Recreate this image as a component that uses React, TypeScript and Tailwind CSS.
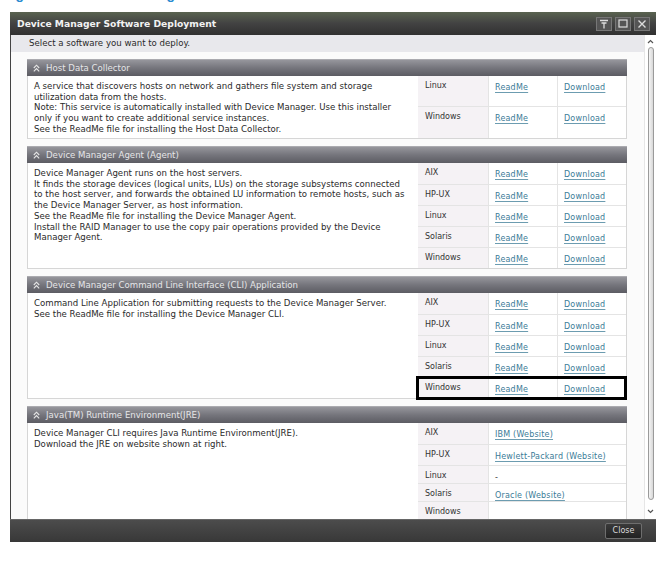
import type { ReactNode } from 'react';

type Row = { os: string; h: string; readme?: boolean; site?: string };

const osRows = (heights: string[]): Row[] =>
  ['AIX', 'HP-UX', 'Linux', 'Solaris', 'Windows'].map((os, i) => ({ os, h: heights[i], readme: true }));

const Chevrons = () => (
  <svg width="7" height="8" viewBox="0 0 7 8" className="shrink-0">
    <path d="M0.8 4 L3.5 1.2 L6.2 4 M0.8 7.3 L3.5 4.5 L6.2 7.3" fill="none" stroke="#e6e6e6" strokeWidth="1.1" />
  </svg>
);

const Link = ({ children }: { children: ReactNode }) => (
  <span className="text-[#3b7b97] underline underline-offset-[1.5px] decoration-[#6c9cb0] tracking-[0.2px]">
    {children}
  </span>
);

const Section = ({
  title,
  text,
  rows,
  highlight,
}: {
  title: string;
  text: string[];
  rows: Row[];
  highlight?: string;
}) => (
  <div className="w-[600px]">
    <div className="h-[17px] flex items-center gap-[6px] pl-[6px] bg-gradient-to-b from-[#96969c] via-[#75757c] to-[#5c5c63] border-t border-[#ababb0] text-[#e6e6e8] text-[8.6px]">
      <Chevrons />
      <span>{title}</span>
    </div>
    <div className="flex bg-white border-x border-b border-[#d6d6d6]">
      <div className="w-[390px] pl-[6px] pt-[5px] text-[8.6px] leading-[10.7px] text-[#2a2a2a] whitespace-nowrap">
        {text.map((t) => (
          <div key={t}>{t}</div>
        ))}
      </div>
      <div className="flex-1 flex flex-col">
        {rows.map((r, i) => (
          <div
            key={r.os}
            className={`relative flex text-[8px] leading-[11px] ${r.h} ${i > 0 ? 'border-t border-[#e4e4e4]' : ''}`}
          >
            <div className="w-[71px] shrink-0 bg-[#f5f2f5] border-r border-[#e4e4e4] pl-[7px] pt-[4px] text-[#333]">
              {r.os}
            </div>
            {r.readme ? (
              <>
                <div className="w-[69px] shrink-0 border-r border-[#e4e4e4] pl-[6px] pt-[6px]">
                  <Link>ReadMe</Link>
                </div>
                <div className="flex-1 pl-[6px] pt-[6px]">
                  <Link>Download</Link>
                </div>
              </>
            ) : (
              <div className="flex-1 pl-[6px] pt-[6px] text-[#333]">
                {r.site === '-' ? '-' : r.site ? <Link>{r.site}</Link> : null}
              </div>
            )}
            {highlight === r.os && (
              <div className="absolute -left-[2px] -right-[1px] -top-[2px] -bottom-[2px] border-[3px] border-black" />
            )}
          </div>
        ))}
      </div>
    </div>
  </div>
);

export default function App() {
  return (
    <div className="w-[662px] h-[561px] bg-white overflow-hidden font-['DejaVu_Sans',sans-serif]">
      <div className="h-[5px] overflow-hidden pl-[3px]">
        <div className="-mt-[13px] text-[14px] leading-[14px] font-bold text-[#2a8ad0] font-['Liberation_Sans',sans-serif] whitespace-nowrap">
          Figure 3-15 Device Manager
        </div>
      </div>

      <div className="ml-[10px] mt-[7px] w-[646px] flex flex-col">
        <div className="h-[23px] flex items-center justify-between pl-[7px] pr-[6px] bg-gradient-to-b from-[#5a6350] via-[#424242] to-[#313131]">
          <span className="text-[9.2px] font-bold text-[#f2f2f2]">Device Manager Software Deployment</span>
          <div className="flex gap-[3px]">
            <div className="w-[16px] h-[14px] border border-[#777] bg-[#555] flex items-center justify-center">
              <svg width="10" height="10" viewBox="0 0 10 10">
                <path d="M1 1.5 H9 M2.5 4 H7.5 M5 4 V9.5" stroke="#dcdcdc" strokeWidth="1.3" fill="none" />
              </svg>
            </div>
            <div className="w-[16px] h-[14px] border border-[#777] bg-[#555] flex items-center justify-center">
              <svg width="10" height="9" viewBox="0 0 10 9">
                <rect x="1" y="1" width="8" height="7" stroke="#dcdcdc" strokeWidth="1.2" fill="none" />
              </svg>
            </div>
            <div className="w-[16px] h-[14px] border border-[#777] bg-[#555] flex items-center justify-center">
              <svg width="10" height="10" viewBox="0 0 10 10">
                <path d="M1.5 1.5 L8.5 8.5 M8.5 1.5 L1.5 8.5" stroke="#dcdcdc" strokeWidth="1.4" fill="none" />
              </svg>
            </div>
          </div>
        </div>

        <div className="h-[484px] flex border-l border-[#444] overflow-hidden bg-[#fbfbfb]">
          <div className="w-[633px] flex flex-col">
            <div className="h-[17px] shrink-0 flex items-center pl-[18px] bg-[#e8e8ec] text-[8.6px] text-[#2a2a2a]">
              Select a software you want to deploy.
            </div>
            <div className="flex flex-col gap-[7px] pl-[16px] pt-[7px]">
              <Section
                title="Host Data Collector"
                text={[
                  'A service that discovers hosts on network and gathers file system and storage',
                  'utilization data from the hosts.',
                  'Note: This service is automatically installed with Device Manager. Use this installer',
                  'only if you want to create additional service instances.',
                  'See the ReadMe file for installing the Host Data Collector.',
                ]}
                rows={[
                  { os: 'Linux', h: 'h-[30px]', readme: true },
                  { os: 'Windows', h: 'h-[32px]', readme: true },
                ]}
              />
              <Section
                title="Device Manager Agent (Agent)"
                text={[
                  'Device Manager Agent runs on the host servers.',
                  'It finds the storage devices (logical units, LUs) on the storage subsystems connected',
                  'to the host server, and forwards the obtained LU information to remote hosts, such as',
                  'the Device Manager Server, as host information.',
                  'See the ReadMe file for installing the Device Manager Agent.',
                  'Install the RAID Manager to use the copy pair operations provided by the Device',
                  'Manager Agent.',
                ]}
                rows={osRows(['h-[21px]', 'h-[21px]', 'h-[21px]', 'h-[21px]', 'h-[21px]'])}
              />
              <Section
                title="Device Manager Command Line Interface (CLI) Application"
                text={[
                  'Command Line Application for submitting requests to the Device Manager Server.',
                  'See the ReadMe file for installing the Device Manager CLI.',
                ]}
                rows={osRows(['h-[21px]', 'h-[21px]', 'h-[21px]', 'h-[21px]', 'h-[21px]'])}
                highlight="Windows"
              />
              <Section
                title="Java(TM) Runtime Environment(JRE)"
                text={[
                  'Device Manager CLI requires Java Runtime Environment(JRE).',
                  'Download the JRE on website shown at right.',
                ]}
                rows={[
                  { os: 'AIX', h: 'h-[21px]', site: 'IBM (Website)' },
                  { os: 'HP-UX', h: 'h-[21px]', site: 'Hewlett-Packard (Website)' },
                  { os: 'Linux', h: 'h-[18px]', site: '-' },
                  { os: 'Solaris', h: 'h-[18px]', site: 'Oracle (Website)' },
                  { os: 'Windows', h: 'h-[24px]' },
                ]}
              />
            </div>
          </div>
          <div className="flex-1 flex flex-col items-center pt-[4px] bg-white border-l border-[#e6e6e6]">
            <svg width="7" height="5" viewBox="0 0 7 5">
              <path d="M1 4 L3.5 1.5 L6 4" stroke="#555" strokeWidth="1.2" fill="none" />
            </svg>
            <div className="mt-[3px] w-[6px] h-[453px] rounded-[3px] border border-[#9a9a9a] bg-gradient-to-r from-[#f4f4f4] to-[#d8d8d8]" />
            <svg width="7" height="5" viewBox="0 0 7 5" className="mt-[9px]">
              <path d="M1 1 L3.5 3.5 L6 1" stroke="#555" strokeWidth="1.2" fill="none" />
            </svg>
          </div>
        </div>

        <div className="h-[23px] flex items-center justify-end pr-[14px] bg-gradient-to-b from-[#4c4c4c] to-[#383838] border-t border-[#666]">
          <div className="w-[37px] h-[16px] rounded-[2px] border border-[#6e6e6e] bg-gradient-to-b from-[#3a3a3a] to-[#222] flex items-center justify-center text-[8px] text-[#dcdcdc]">
            Close
          </div>
        </div>
      </div>
    </div>
  );
}
